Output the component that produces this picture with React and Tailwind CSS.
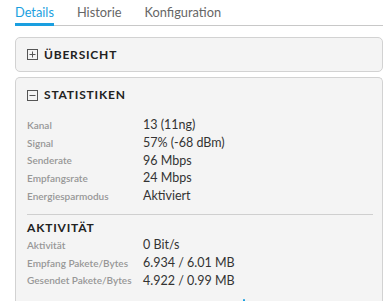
import React from 'react';

const stats = [
    ['Kanal', '13 (11ng)'],
    ['Signal', '57% (-68 dBm)'],
    ['Senderate', '96 Mbps'],
    ['Empfangsrate', '24 Mbps'],
    ['Energiesparmodus', 'Aktiviert'],
];

const activity = [
    ['Aktivität', '0 Bit/s'],
    ['Empfang Pakete/Bytes', '6.934 / 6.01 MB'],
    ['Gesendet Pakete/Bytes', '4.922 / 0.99 MB'],
];

// small square toggle icon, plus or minus
function BoxIcon({ open }) {
    return (
        <svg width="11" height="11" viewBox="0 0 11 11" className="shrink-0">
            <rect x="0.5" y="0.5" width="10" height="10" fill="none" stroke="#555" strokeWidth="1" />
            <line x1="2.5" y1="5.5" x2="8.5" y2="5.5" stroke="#555" strokeWidth="1" />
            {!open && <line x1="5.5" y1="2.5" x2="5.5" y2="8.5" stroke="#555" strokeWidth="1" />}
        </svg>
    );
}

function Rows({ items }) {
    return items.map(([label, value]) => (
        <div key={label} className="flex h-[17.6px] items-center">
            <span className="w-[116px] shrink-0 text-[10px] font-semibold text-[#979797]">{label}</span>
            <span className="text-[12.5px] text-[#333]">{value}</span>
        </div>
    ));
}

export default function App() {
    return (
        <div className="w-[389px] h-[301px] overflow-hidden bg-white pl-[15px] pr-[6px] font-['Lato',sans-serif]">
            {/* tabs */}
            <div className="flex h-[26px] gap-[23px] border-b border-[#c8c8c8] text-[12.8px]">
                <div className="flex items-center border-b-[3px] border-[#1a9fe0] pt-[3px] text-[#1a9fe0] -mb-[1px]">Details</div>
                <div className="flex items-center pt-[1px] text-[#666]">Historie</div>
                <div className="flex items-center pt-[1px] text-[#666]">Konfiguration</div>
            </div>

            {/* Übersicht */}
            <div className="mt-[11px] flex h-[35px] items-center gap-[6px] rounded-[5px] border border-[#d2d2d2] bg-[#f4f4f4] pl-[11px]">
                <BoxIcon open={false} />
                <span className="text-[12px] font-bold tracking-[0.8px] text-[#222]">ÜBERSICHT</span>
            </div>

            {/* Statistiken */}
            <div className="relative mt-[5px] h-[240px] rounded-t-[5px] border border-b-0 border-[#d2d2d2] bg-[#f4f4f4] pl-[11px] pr-[9px] pt-[10px]">
                <div className="flex h-[14px] items-center gap-[6px]">
                    <BoxIcon open={true} />
                    <span className="text-[12px] font-bold tracking-[0.8px] text-[#222]">STATISTIKEN</span>
                </div>
                <div className="mt-[15px]">
                    <Rows items={stats} />
                </div>
                <div className="mt-[9px] border-t border-[#cfcfcf]" />
                <div className="mt-[6px] flex h-[14px] items-center text-[12px] font-bold tracking-[0.8px] text-[#222]">AKTIVITÄT</div>
                <div className="mt-[2px]">
                    <Rows items={activity} />
                </div>
                <div className="absolute left-[227px] top-[221px] h-[3px] w-[2px] rounded-full bg-[#1a9fe0]" />
            </div>
        </div>
    );
}
